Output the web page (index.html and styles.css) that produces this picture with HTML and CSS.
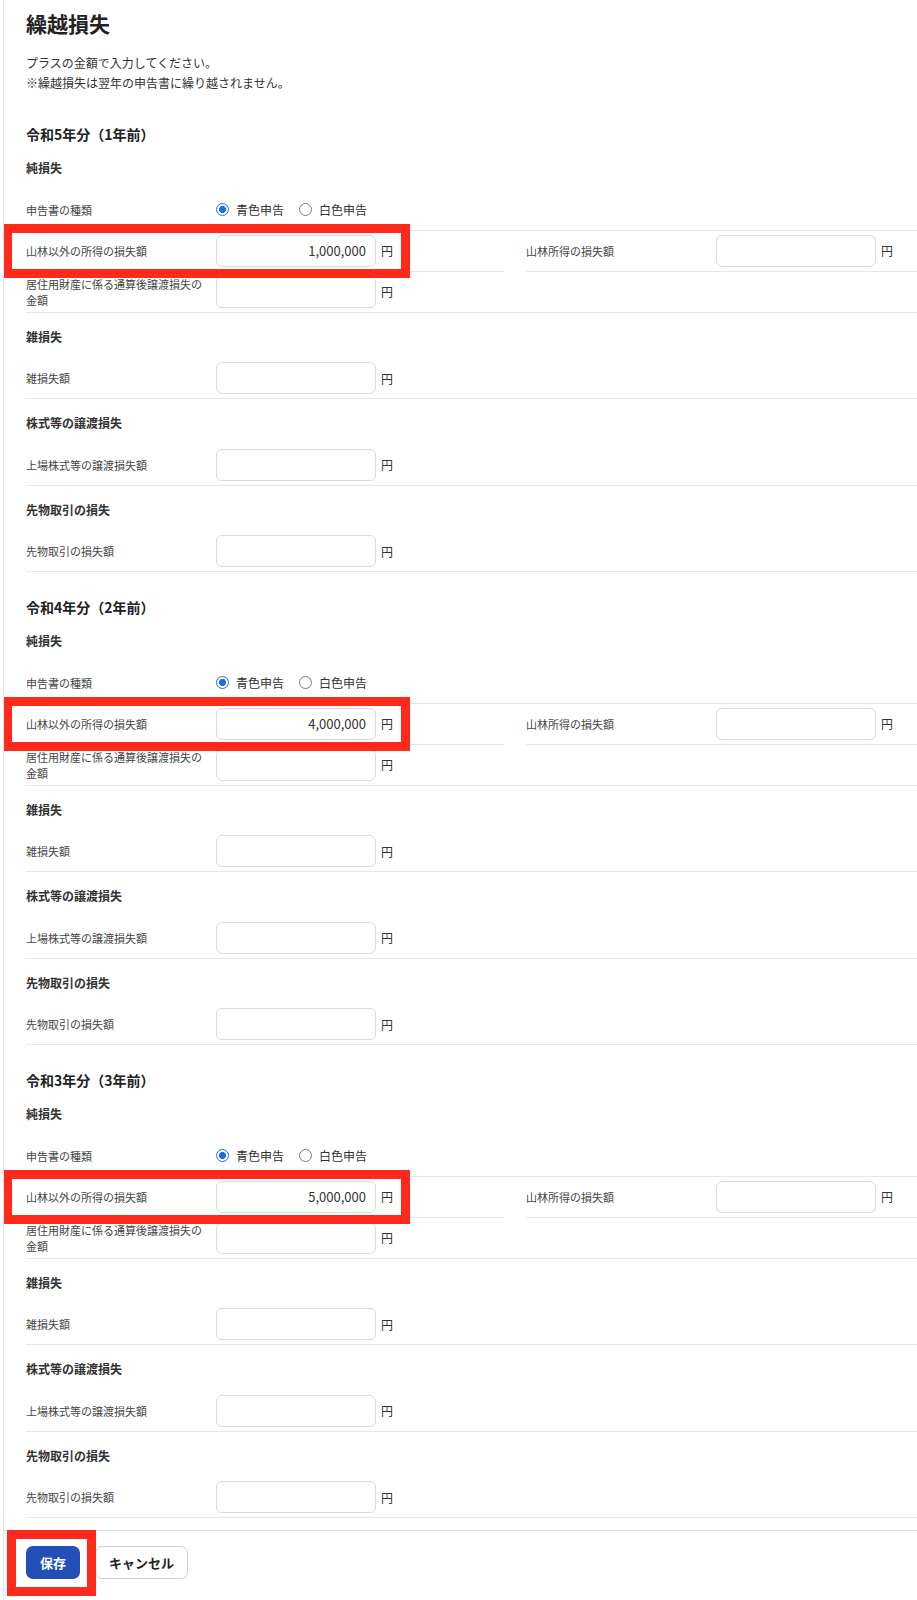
FILE: index.html
```html
<!DOCTYPE html>
<html lang="ja">
<head>
<meta charset="utf-8">
<title>繰越損失</title>
<link rel="stylesheet" href="styles.css">
</head>
<body>
<div class="page">
  <div class="content">
    <h1 class="title">繰越損失</h1>
    <p class="note">プラスの金額で入力してください。<br>※繰越損失は翌年の申告書に繰り越されません。</p>

    <section class="period">
      <h2 class="period-title">令和5年分（1年前）</h2>
      <div class="group">
        <h3 class="group-title">純損失</h3>
        <div class="row">
          <div class="label">申告書の種類</div>
          <div class="radios">
            <label class="radio"><input type="radio" name="kind5" checked>青色申告</label>
            <label class="radio"><input type="radio" name="kind5">白色申告</label>
          </div>
        </div>
        <div class="split">
          <div class="row">
            <span class="mark"></span>
            <div class="label">山林以外の所得の損失額</div>
            <input class="amount" type="text" value="1,000,000">
            <span class="yen">円</span>
          </div>
          <div class="row">
            <div class="label">山林所得の損失額</div>
            <input class="amount" type="text" value="">
            <span class="yen">円</span>
          </div>
        </div>
        <div class="row">
          <div class="label">居住用財産に係る通算後譲渡損失の金額</div>
          <input class="amount" type="text" value="">
          <span class="yen">円</span>
        </div>
      </div>
      <div class="group">
        <h3 class="group-title">雑損失</h3>
        <div class="row">
          <div class="label">雑損失額</div>
          <input class="amount" type="text" value="">
          <span class="yen">円</span>
        </div>
      </div>
      <div class="group">
        <h3 class="group-title">株式等の譲渡損失</h3>
        <div class="row">
          <div class="label">上場株式等の譲渡損失額</div>
          <input class="amount" type="text" value="">
          <span class="yen">円</span>
        </div>
      </div>
      <div class="group">
        <h3 class="group-title">先物取引の損失</h3>
        <div class="row">
          <div class="label">先物取引の損失額</div>
          <input class="amount" type="text" value="">
          <span class="yen">円</span>
        </div>
      </div>
    </section>

    <section class="period">
      <h2 class="period-title">令和4年分（2年前）</h2>
      <div class="group">
        <h3 class="group-title">純損失</h3>
        <div class="row">
          <div class="label">申告書の種類</div>
          <div class="radios">
            <label class="radio"><input type="radio" name="kind4" checked>青色申告</label>
            <label class="radio"><input type="radio" name="kind4">白色申告</label>
          </div>
        </div>
        <div class="split">
          <div class="row">
            <span class="mark"></span>
            <div class="label">山林以外の所得の損失額</div>
            <input class="amount" type="text" value="4,000,000">
            <span class="yen">円</span>
          </div>
          <div class="row">
            <div class="label">山林所得の損失額</div>
            <input class="amount" type="text" value="">
            <span class="yen">円</span>
          </div>
        </div>
        <div class="row">
          <div class="label">居住用財産に係る通算後譲渡損失の金額</div>
          <input class="amount" type="text" value="">
          <span class="yen">円</span>
        </div>
      </div>
      <div class="group">
        <h3 class="group-title">雑損失</h3>
        <div class="row">
          <div class="label">雑損失額</div>
          <input class="amount" type="text" value="">
          <span class="yen">円</span>
        </div>
      </div>
      <div class="group">
        <h3 class="group-title">株式等の譲渡損失</h3>
        <div class="row">
          <div class="label">上場株式等の譲渡損失額</div>
          <input class="amount" type="text" value="">
          <span class="yen">円</span>
        </div>
      </div>
      <div class="group">
        <h3 class="group-title">先物取引の損失</h3>
        <div class="row">
          <div class="label">先物取引の損失額</div>
          <input class="amount" type="text" value="">
          <span class="yen">円</span>
        </div>
      </div>
    </section>

    <section class="period">
      <h2 class="period-title">令和3年分（3年前）</h2>
      <div class="group">
        <h3 class="group-title">純損失</h3>
        <div class="row">
          <div class="label">申告書の種類</div>
          <div class="radios">
            <label class="radio"><input type="radio" name="kind3" checked>青色申告</label>
            <label class="radio"><input type="radio" name="kind3">白色申告</label>
          </div>
        </div>
        <div class="split">
          <div class="row">
            <span class="mark"></span>
            <div class="label">山林以外の所得の損失額</div>
            <input class="amount" type="text" value="5,000,000">
            <span class="yen">円</span>
          </div>
          <div class="row">
            <div class="label">山林所得の損失額</div>
            <input class="amount" type="text" value="">
            <span class="yen">円</span>
          </div>
        </div>
        <div class="row">
          <div class="label">居住用財産に係る通算後譲渡損失の金額</div>
          <input class="amount" type="text" value="">
          <span class="yen">円</span>
        </div>
      </div>
      <div class="group">
        <h3 class="group-title">雑損失</h3>
        <div class="row">
          <div class="label">雑損失額</div>
          <input class="amount" type="text" value="">
          <span class="yen">円</span>
        </div>
      </div>
      <div class="group">
        <h3 class="group-title">株式等の譲渡損失</h3>
        <div class="row">
          <div class="label">上場株式等の譲渡損失額</div>
          <input class="amount" type="text" value="">
          <span class="yen">円</span>
        </div>
      </div>
      <div class="group">
        <h3 class="group-title">先物取引の損失</h3>
        <div class="row">
          <div class="label">先物取引の損失額</div>
          <input class="amount" type="text" value="">
          <span class="yen">円</span>
        </div>
      </div>
    </section>
  </div>

  <footer class="footer">
    <button class="btn btn-primary" type="button">保存<span class="btn-mark"></span></button>
    <button class="btn btn-secondary" type="button">キャンセル</button>
  </footer>
</div>
</body>
</html>
```

FILE: styles.css
```css
html, body {
  margin: 0;
  padding: 0;
  overflow: hidden;
  background: #fff;
}

body {
  font-family: "Noto Sans CJK JP", "Noto Sans", sans-serif;
  color: #333;
}

.page {
  margin-left: 3px;
  border-left: 1px solid #e4e4e4;
  min-height: 1600px;
  box-sizing: border-box;
  padding-top: 8px;
  overflow: hidden;
}

.content {
  width: 978px;
  padding: 0 0 12px 22px;
}

.title {
  margin: 0 0 15px;
  font-size: 21px;
  line-height: 30px;
  font-weight: 700;
  color: #222;
}

.note {
  margin: 0 0 31px;
  font-size: 12px;
  line-height: 20px;
  color: #333;
}

.period {
  margin-top: 25px;
}

.period-title {
  margin: 0;
  font-size: 14px;
  line-height: 20px;
  font-weight: 700;
  color: #222;
}

.group-title {
  margin: 0;
  padding: 14px 0 11.5px;
  font-size: 12px;
  line-height: 20px;
  font-weight: 700;
  color: #333;
}

.row {
  display: flex;
  align-items: center;
  height: 40px;
  border-bottom: 1px solid #e6e6e6;
}

.split {
  display: flex;
  gap: 22px;
}

.split .row {
  width: 478px;
  flex: none;
  position: relative;
}

.label {
  flex: none;
  width: 180px;
  margin-right: 10px;
  font-size: 11px;
  line-height: 16px;
  color: #444;
}

.amount {
  flex: none;
  width: 160px;
  height: 32px;
  box-sizing: border-box;
  margin: 0;
  padding: 0 9px;
  border: 1px solid #dadada;
  border-radius: 6px;
  background: #fff;
  font-family: "Noto Sans CJK JP", "Noto Sans", sans-serif;
  font-size: 13px;
  text-align: right;
  color: #333;
  outline: none;
}

.yen {
  margin-left: 5px;
  font-size: 12px;
  color: #333;
}

.radios {
  display: flex;
  align-items: center;
  font-size: 12px;
  color: #333;
}

.radio {
  display: flex;
  align-items: center;
  margin-right: 15px;
}

.radio input {
  -webkit-appearance: none;
  appearance: none;
  width: 13px;
  height: 13px;
  margin: 0 7px 0 0;
  box-sizing: border-box;
  border: 1px solid #7a7a7a;
  border-radius: 50%;
  background: #fff;
}

.radio input:checked {
  border-color: #1b6fe0;
  background: radial-gradient(circle, #1b6fe0 0 3.3px, #fff 3.8px);
}

.mark {
  position: absolute;
  left: -23px;
  top: -7px;
  width: 407px;
  height: 54px;
  box-sizing: border-box;
  border: 9px solid #ff2a1b;
  pointer-events: none;
}

.footer {
  display: flex;
  gap: 15px;
  padding: 15px 22px 20px;
  border-top: 1px solid #e3e3e3;
}

.btn {
  height: 33px;
  box-sizing: border-box;
  border-radius: 7px;
  font-family: "Noto Sans CJK JP", "Noto Sans", sans-serif;
  font-size: 13px;
  font-weight: 700;
  padding: 0;
  cursor: pointer;
}

.btn-primary {
  position: relative;
  width: 54px;
  border: none;
  background: #2350b6;
  color: #fff;
}

.btn-secondary {
  width: 93px;
  border: 1px solid #cfcfcf;
  background: #fff;
  color: #222;
}

.btn-mark {
  position: absolute;
  left: -19px;
  top: -16px;
  width: 89px;
  height: 66px;
  box-sizing: border-box;
  border: 9px solid #ff2a1b;
  pointer-events: none;
}
```
